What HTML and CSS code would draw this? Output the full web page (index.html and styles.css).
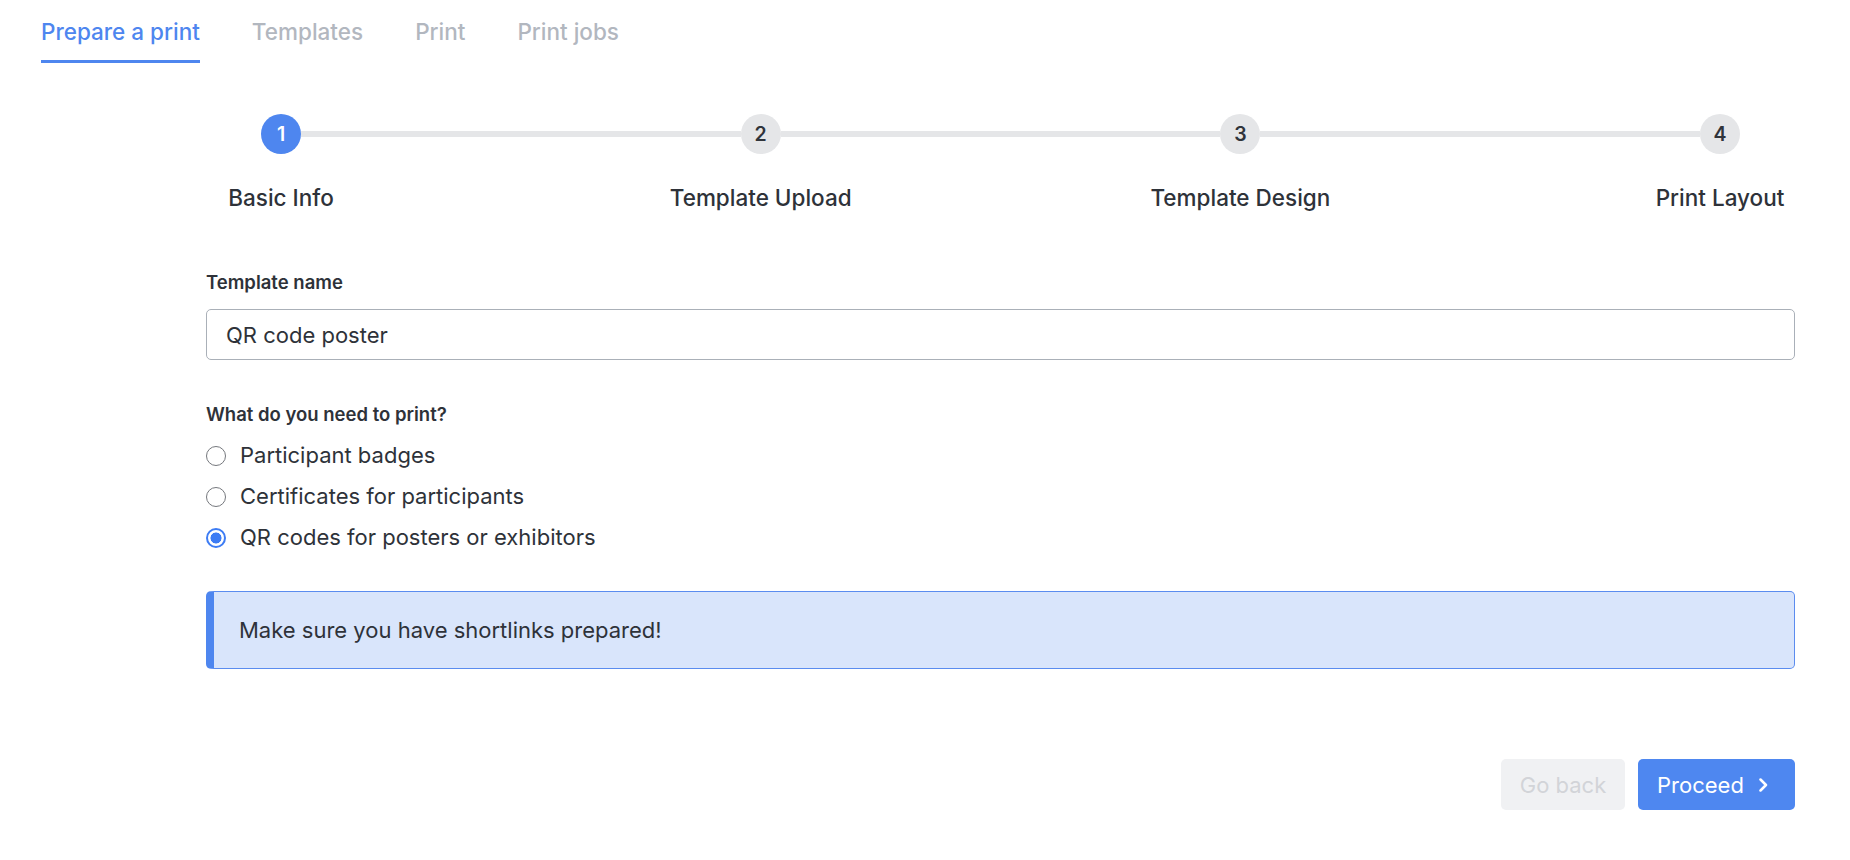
FILE: index.html
```html
<!DOCTYPE html>
<html lang="en">
<head>
<meta charset="utf-8">
<title>Prepare a print</title>
<link rel="stylesheet" href="styles.css">
</head>
<body>
  <nav class="tabs">
    <a class="tab tab-active">Prepare a print</a>
    <a class="tab">Templates</a>
    <a class="tab">Print</a>
    <a class="tab">Print jobs</a>
  </nav>

  <main class="content">
    <div class="stepper">
      <div class="step step-active">
        <div class="step-dot">1</div>
        <div class="step-label">Basic Info</div>
      </div>
      <div class="step-bar"></div>
      <div class="step">
        <div class="step-dot">2</div>
        <div class="step-label">Template Upload</div>
      </div>
      <div class="step-bar"></div>
      <div class="step">
        <div class="step-dot">3</div>
        <div class="step-label">Template Design</div>
      </div>
      <div class="step-bar"></div>
      <div class="step">
        <div class="step-dot">4</div>
        <div class="step-label">Print Layout</div>
      </div>
    </div>

    <form class="form">
      <label class="field-label" for="tname">Template name</label>
      <input class="text-input" id="tname" type="text" value="QR code poster">

      <div class="field-label question">What do you need to print?</div>
      <div class="options">
        <div class="option"><span class="radio"></span><span>Participant badges</span></div>
        <div class="option"><span class="radio"></span><span>Certificates for participants</span></div>
        <div class="option"><span class="radio radio-checked"></span><span>QR codes for posters or exhibitors</span></div>
      </div>

      <div class="alert">Make sure you have shortlinks prepared!</div>

      <div class="actions">
        <button type="button" class="btn btn-disabled">Go back</button>
        <button type="button" class="btn btn-primary">Proceed
          <svg class="chev" width="12" height="14" viewBox="0 0 12 14" aria-hidden="true"><path d="M3.5 1.5 L9 7 L3.5 12.5" fill="none" stroke="#ffffff" stroke-width="2.5" stroke-linecap="round" stroke-linejoin="round"/></svg>
        </button>
      </div>
    </form>
  </main>
</body>
</html>
```

FILE: styles.css
```css
* {
  box-sizing: border-box;
}

html, body {
  margin: 0;
  padding: 0;
  background: #ffffff;
}

body {
  font-family: "Inter", "Noto Sans", "Liberation Sans", sans-serif;
  color: #2e3239;
  width: 1850px;
}

/* Tabs */
.tabs {
  display: flex;
  gap: 52px;
  padding-left: 41px;
}

.tab {
  font-size: 22.5px;
  font-weight: 500;
  line-height: 30px;
  padding: 17px 0 13px;
  color: #b2b7bf;
  border-bottom: 3px solid transparent;
  cursor: pointer;
}

.tab-active {
  color: #4e86ef;
  border-bottom-color: #4e86ef;
}

/* Content */
.content {
  margin-left: 206px;
  width: 1589px;
}

/* Stepper */
.stepper {
  display: flex;
  align-items: flex-start;
  margin-top: 51px;
  padding: 0 55px;
}

.step {
  width: 40px;
  flex: none;
  display: flex;
  flex-direction: column;
  align-items: center;
}

.step-dot {
  width: 40px;
  height: 40px;
  border-radius: 50%;
  background: #e5e6e8;
  color: #30343b;
  font-size: 19.5px;
  font-weight: 600;
  display: flex;
  align-items: center;
  justify-content: center;
}

.step-active .step-dot {
  background: #4e86ef;
  color: #ffffff;
}

.step-label {
  margin-top: 29px;
  white-space: nowrap;
  font-size: 22.5px;
  font-weight: 550;
  line-height: 30px;
  color: #2e3239;
}

.step-bar {
  flex: 1;
  height: 6px;
  margin-top: 17px;
  background: #e5e6e8;
}

/* Form */
.form {
  display: flex;
  flex-direction: column;
  margin-top: 57px;
}

.field-label {
  font-size: 18.5px;
  font-weight: 600;
  line-height: 25px;
  color: #2e3239;
}

.text-input {
  margin-top: 14px;
  width: 100%;
  height: 51px;
  border: 1px solid #aab0b8;
  border-radius: 5px;
  padding: 0 19px;
  font-family: inherit;
  font-size: 22px;
  color: #2e3239;
  background: #ffffff;
  outline: none;
}

.question {
  margin-top: 42px;
}

.options {
  display: flex;
  flex-direction: column;
  margin-top: 8px;
}

.option {
  display: flex;
  align-items: center;
  gap: 14px;
  height: 41px;
  font-size: 22px;
  line-height: 41px;
  color: #2e3239;
}

.radio {
  width: 20px;
  height: 20px;
  flex: none;
  border-radius: 50%;
  border: 1.5px solid #75787d;
  background: #ffffff;
}

.radio-checked {
  border: 2px solid #3d7cf4;
  background: radial-gradient(circle, #3d7cf4 0 5.2px, #ffffff 5.8px);
}

.alert {
  margin-top: 33px;
  background: #d9e5fb;
  border: 1px solid #5b8cef;
  border-left: 8px solid #4e86ef;
  border-radius: 5px;
  padding: 26px 25px 25px;
  font-size: 22px;
  line-height: 25px;
  color: #2e3239;
}

.actions {
  display: flex;
  justify-content: flex-end;
  gap: 13px;
  margin-top: 90px;
}

.btn {
  height: 51px;
  border: none;
  border-radius: 5px;
  font-family: inherit;
  font-size: 22px;
  padding: 0 20px;
  display: flex;
  align-items: center;
}

.btn-disabled {
  width: 124px;
  justify-content: center;
  padding: 0;
  background: #f0f1f3;
  color: #d2d4d8;
}

.btn-primary {
  width: 157px;
  background: #4e87f0;
  color: #ffffff;
  gap: 13px;
  padding-left: 19px;
  padding-right: 0;
}

.chev {
  display: block;
}
```
